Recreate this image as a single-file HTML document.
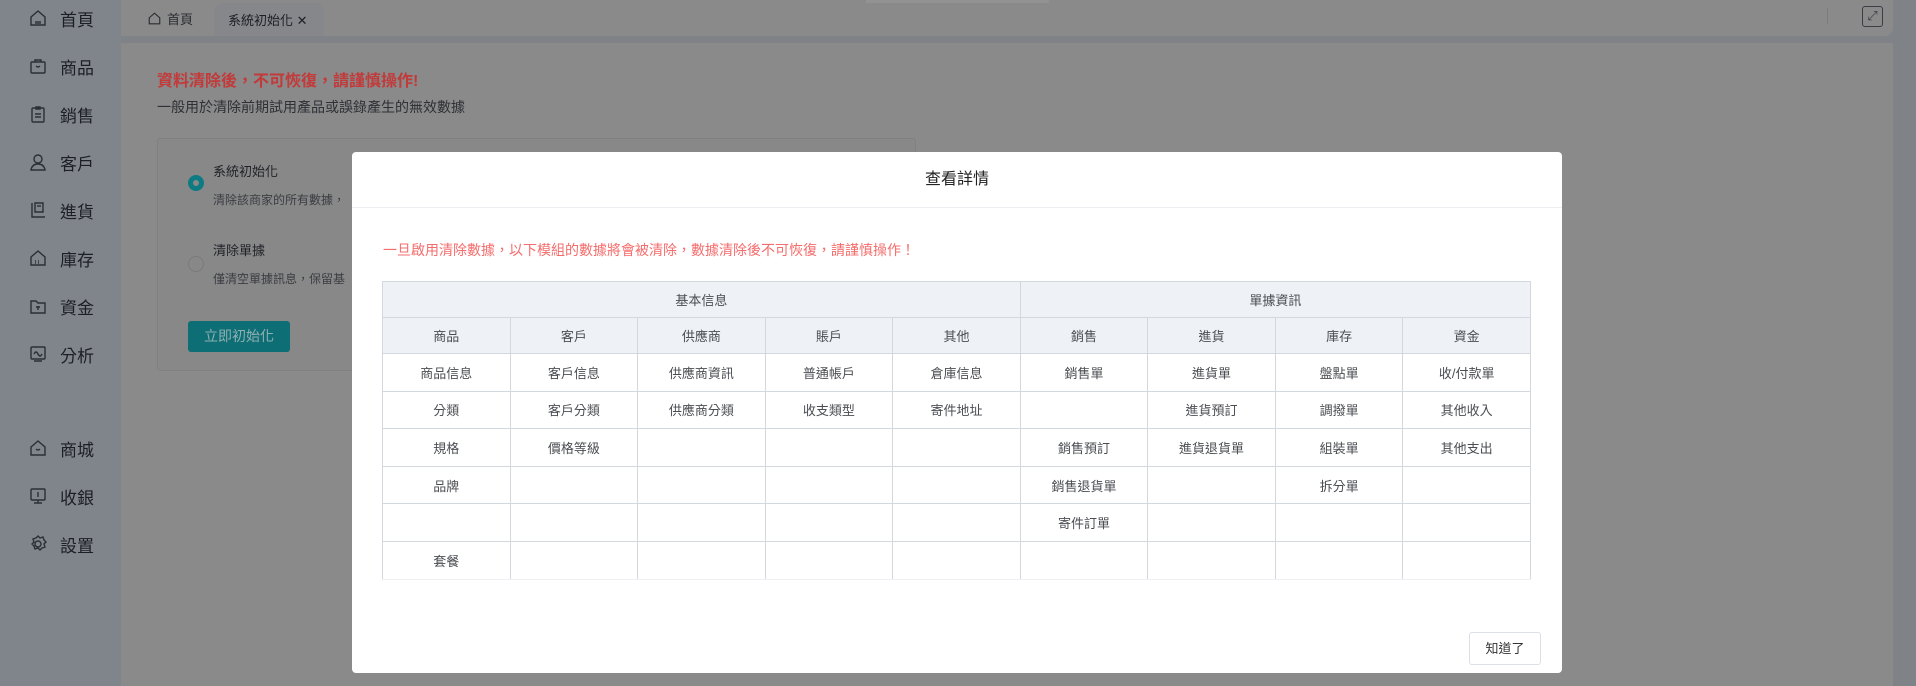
<!DOCTYPE html>
<html><head><meta charset="utf-8"><style>
*{margin:0;padding:0;box-sizing:border-box}
body{width:1916px;height:686px;overflow:hidden;background:#7f8388;font-family:"Liberation Sans","Noto Sans CJK TC",sans-serif;position:relative}
.abs{position:absolute}
.side{left:0;top:0;width:121px;height:686px;background:#80848b}
.si{position:absolute;left:28px;font-size:17px;color:#1c1f24;display:flex;align-items:center;height:24px}
.si svg{width:20px;height:20px;margin-right:12px;fill:none;stroke:#2a2e36;stroke-width:1.4}
.tabbar{left:121px;top:0;width:1772px;height:36px;background:#8a8a8a;border-radius:0 0 8px 0}
.main{left:121px;top:43px;width:1772px;height:643px;background:#8a8a8a}
.modal{left:352px;top:152px;width:1210px;height:521px;background:#fff;border-radius:4px}
table{border-collapse:collapse;position:absolute;left:30px;top:129px;width:1149px;table-layout:fixed}
td{border:1px solid #d3d7de;text-align:center;font-size:13px;color:#4a4d52;height:37.6px}
tr.h td{background:#eef1f6;height:36px}
tr.last td{border-bottom-color:#eef0f3}
</style></head><body>
<div class="abs side">
<div class="si" style="top:6px"><svg viewBox="0 0 20 20"><path d="M3 9L10 3l7 6v8H3z"/><path d="M8 13v3M10 13v3M12 13v3"/></svg>首頁</div>
<div class="si" style="top:54px"><svg viewBox="0 0 20 20"><rect x="3" y="6" width="14" height="11" rx="1"/><path d="M7 6V4h6v2M8 10q2 2 4 0"/></svg>商品</div>
<div class="si" style="top:102px"><svg viewBox="0 0 20 20"><rect x="4" y="4" width="12" height="14" rx="1"/><path d="M8 3h4v2H8zM7 10h6M7 13h6"/></svg>銷售</div>
<div class="si" style="top:150px"><svg viewBox="0 0 20 20"><circle cx="10" cy="7" r="4"/><path d="M3 18q1-6 7-6t7 6z"/></svg>客戶</div>
<div class="si" style="top:198px"><svg viewBox="0 0 20 20"><path d="M4 3v14h13M7 3h8v9H7z"/><path d="M9 6h4"/></svg>進貨</div>
<div class="si" style="top:246px"><svg viewBox="0 0 20 20"><path d="M3 9L10 3l7 6v8H3z"/><path d="M7 13h1M10 13h1M7 15h1M10 15h1"/></svg>庫存</div>
<div class="si" style="top:294px"><svg viewBox="0 0 20 20"><path d="M3 5h5l2 2h7v10H3z"/><path d="M10 10v4M8 11h4"/></svg>資金</div>
<div class="si" style="top:342px"><svg viewBox="0 0 20 20"><rect x="3" y="3" width="14" height="12" rx="1"/><path d="M6 10q2-4 4 0t4 0M6 17h8"/></svg>分析</div>
<div class="si" style="top:436px"><svg viewBox="0 0 20 20"><path d="M3 9L10 3l7 6v8H3z"/><path d="M8 11q2 2 4 0"/></svg>商城</div>
<div class="si" style="top:484px"><svg viewBox="0 0 20 20"><rect x="3" y="3" width="14" height="11" rx="1"/><path d="M10 14v3M6 17h8M10 6v5"/></svg>收銀</div>
<div class="si" style="top:532px"><svg viewBox="0 0 20 20"><circle cx="10" cy="10" r="3"/><path d="M10 2l2 2 3-1 1 3 2 2-2 2 1 3-3 1-2 2-2-2-3 1-1-3-2-2 2-2-1-3 3-1z"/></svg>設置</div>
</div>
<div class="abs tabbar">
<div class="abs" style="left:26px;top:9px;font-size:13px;color:#2a2d33;display:flex;align-items:center"><svg width="15" height="15" viewBox="0 0 20 20" style="margin-right:5px;fill:none;stroke:#2a2d33;stroke-width:1.5"><path d="M3 9L10 3l7 6v8H3z"/></svg>首頁</div>
<div class="abs" style="left:93px;top:3px;width:110px;height:33px;background:#85878b;border-radius:8px 8px 0 0;font-size:13px;color:#1c1f24;padding:7px 0 0 14px">系統初始化 <span style="font-size:13px">✕</span></div>
<div class="abs" style="left:1706px;top:8px;width:1px;height:16px;background:#7c7c7c"></div>
<div class="abs" style="left:1741px;top:6px;width:21px;height:21px;border:1.5px solid #3a3e44;border-radius:3px;font-size:13px;color:#3a3e44;text-align:center;line-height:18px">⤢</div>
</div>
<div class="abs" style="left:866px;top:0;width:183px;height:3px;background:#929292"></div>
<div class="abs main">
<div class="abs" style="left:36px;top:24px;font-size:16px;font-weight:bold;color:#c23a3a">資料清除後，不可恢復，請謹慎操作!</div>
<div class="abs" style="left:36px;top:54px;font-size:14px;color:#2e3036">一般用於清除前期試用產品或誤錄產生的無效數據</div>
<div class="abs" style="left:36px;top:95px;width:759px;height:233px;border:1px solid #808080;border-radius:3px;background:#888888">
<div class="abs" style="left:30px;top:36px;width:16px;height:16px;border-radius:50%;background:#0e7a82"><div style="margin:5px;width:6px;height:6px;border-radius:50%;background:#8a8a8a"></div></div>
<div class="abs" style="left:55px;top:22px;font-size:13px;color:#1f2228">系統初始化</div>
<div class="abs" style="left:55px;top:52px;font-size:12px;color:#3a3d42">清除該商家的所有數據，</div>
<div class="abs" style="left:30px;top:117px;width:16px;height:16px;border-radius:50%;border:1px solid #7a7a7a"></div>
<div class="abs" style="left:55px;top:101px;font-size:13px;color:#1f2228">清除單據</div>
<div class="abs" style="left:55px;top:131px;font-size:12px;color:#3a3d42">僅清空單據訊息，保留基</div>
<div class="abs" style="left:30px;top:182px;width:102px;height:31px;background:#0e6e75;border-radius:3px;color:#8fb0b2;font-size:14px;text-align:center;line-height:31px">立即初始化</div>
</div>
</div>
<div class="abs modal">
<div class="abs" style="left:0;top:0;width:1210px;height:56px;border-bottom:1px solid #eceef1;text-align:center;font-size:16px;color:#222;line-height:56px">查看詳情</div>
<div class="abs" style="left:31px;top:88px;font-size:14px;color:#f56c6c">一旦啟用清除數據，以下模組的數據將會被清除，數據清除後不可恢復，請謹慎操作！</div>
<table>
<tr class="h"><td colspan="5">基本信息</td><td colspan="4">單據資訊</td></tr>
<tr class="h"><td>商品</td><td>客戶</td><td>供應商</td><td>賬戶</td><td>其他</td><td>銷售</td><td>進貨</td><td>庫存</td><td>資金</td></tr>
<tr><td>商品信息</td><td>客戶信息</td><td>供應商資訊</td><td>普通帳戶</td><td>倉庫信息</td><td>銷售單</td><td>進貨單</td><td>盤點單</td><td>收/付款單</td></tr>
<tr><td>分類</td><td>客戶分類</td><td>供應商分類</td><td>收支類型</td><td>寄件地址</td><td></td><td>進貨預訂</td><td>調撥單</td><td>其他收入</td></tr>
<tr><td>規格</td><td>價格等級</td><td></td><td></td><td></td><td>銷售預訂</td><td>進貨退貨單</td><td>組裝單</td><td>其他支出</td></tr>
<tr><td>品牌</td><td></td><td></td><td></td><td></td><td>銷售退貨單</td><td></td><td>拆分單</td><td></td></tr>
<tr><td></td><td></td><td></td><td></td><td></td><td>寄件訂單</td><td></td><td></td><td></td></tr>
<tr class="last"><td>套餐</td><td></td><td></td><td></td><td></td><td></td><td></td><td></td><td></td></tr>
</table>
<div class="abs" style="left:1117px;top:480px;width:72px;height:33px;border:1px solid #dcdfe6;border-radius:3px;font-size:13px;color:#333;text-align:center;line-height:31px">知道了</div>
</div>
</body></html>
